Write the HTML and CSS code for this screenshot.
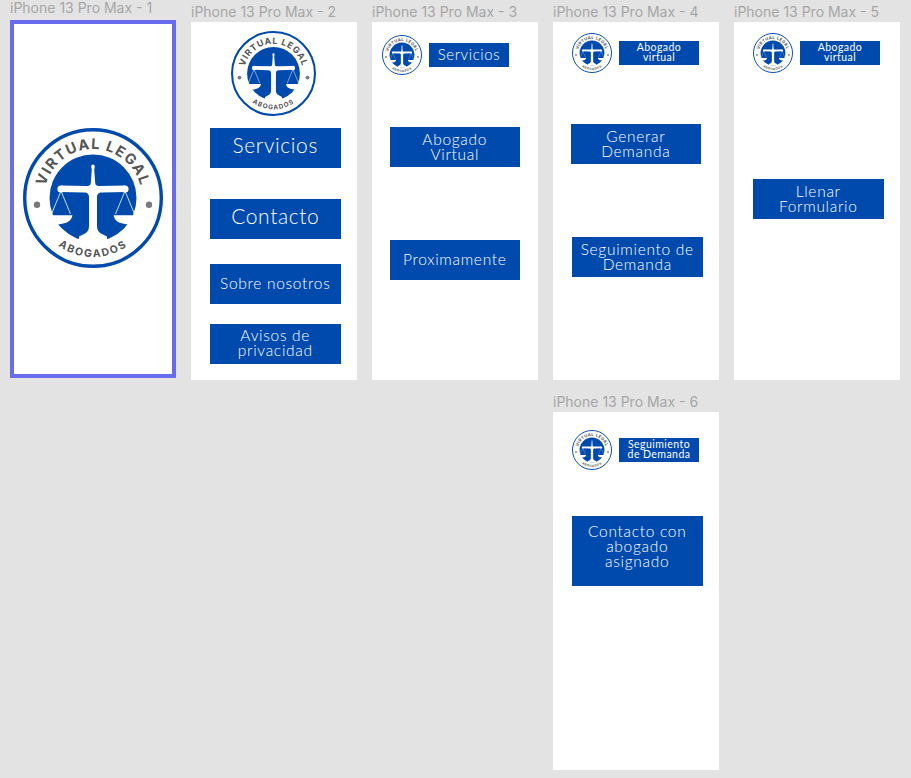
FILE: index.html
```html
<!DOCTYPE html>
<html lang="es">
<head>
<meta charset="utf-8">
<title>Virtual Legal</title>
<link rel="stylesheet" href="styles.css">
</head>
<body>
<svg class="defs" width="0" height="0" aria-hidden="true">
  <symbol id="logo" viewBox="-70 -70 140 140">
    <defs>
      <path id="arcTop" d="M-49 0A49 49 0 0 1 49 0"/>
      <path id="arcBot" d="M-59 0A59 59 0 0 0 59 0"/>
    </defs>
    <circle r="70" fill="#fff"/>
    <circle r="68.300" fill="none" stroke="#004aad" stroke-width="3.400"/>
    <circle r="43.500" fill="#004aad"/>
    <circle cx="-56" cy="6.700" r="3.200" fill="#7a7a7a"/>
    <circle cx="56" cy="6.700" r="3.200" fill="#7a7a7a"/>
    <path fill="#fff" d="M0 -33.500C1.300 -33.500 1.800 -32.500 1.800 -31L1.200 -28.500 2.200 -15C2.500 -12.500 4 -12 7 -12L32 -12.500V-6L9 -5.500C5.500 -5.500 4 -3.500 4 -1V28C4 32 5.500 34 8 35.500L14 38.500V44H-14V38.500L-8 35.500C-5.500 34 -4 32 -4 28V-1C-4 -3.500 -5.500 -5.500 -9 -5.500L-32 -6V-12.500L-7 -12C-4 -12 -2.500 -12.500 -2.200 -15L-1.200 -28.500-1.800 -31C-1.800 -32.500 -1.300 -33.500 0 -33.500Z"/>
    <circle cx="-32" cy="-9" r="3.600" fill="#fff"/>
    <circle cx="32" cy="-9" r="3.600" fill="#fff"/>
    <path fill="none" stroke="#fff" stroke-width=".8" d="M-32 -7-41.500 16M-32 -7-22.500 16M32 -7 41.500 16M32 -7 22.500 16"/>
    <path fill="#fff" d="M-46 17.200H-20.600C-21.500 22-24 25.500-36 26.500L-46 26.500ZM46 17.200H20.600C21.500 22 24 25.500 36 26.500L46 26.500Z"/>
    <text class="logo-top"><textPath href="#arcTop" startOffset="50%" text-anchor="middle">VIRTUAL LEGAL</textPath></text>
    <text class="logo-bot"><textPath href="#arcBot" startOffset="50%" text-anchor="middle">ABOGADOS</textPath></text>
  </symbol>
</svg>

<main class="canvas">
  <section class="col">
    <h2 class="label label-first">iPhone 13 Pro Max - 1</h2>
    <div class="frame frame-selected">
      <svg class="logo logo-xl"><use href="#logo"/></svg>
    </div>
  </section>

  <section class="col">
    <h2 class="label">iPhone 13 Pro Max - 2</h2>
    <div class="frame frame-home">
      <svg class="logo logo-lg"><use href="#logo"/></svg>
      <a class="btn btn-xl home-a">Servicios</a>
      <a class="btn btn-xl home-b">Contacto</a>
      <a class="btn btn-md home-c">Sobre nosotros</a>
      <a class="btn btn-md home-d">Avisos de<br>privacidad</a>
    </div>
  </section>

  <section class="col">
    <h2 class="label">iPhone 13 Pro Max - 3</h2>
    <div class="frame">
      <header class="head head-3">
        <svg class="logo logo-sm"><use href="#logo"/></svg>
        <span class="tag tag-lg">Servicios</span>
      </header>
      <a class="btn btn-md s3-a">Abogado<br>Virtual</a>
      <a class="btn btn-md s3-b">Proximamente</a>
    </div>
  </section>

  <section class="col">
    <h2 class="label">iPhone 13 Pro Max - 4</h2>
    <div class="frame">
      <header class="head head-4">
        <svg class="logo logo-sm"><use href="#logo"/></svg>
        <span class="tag">Abogado<br>virtual</span>
      </header>
      <a class="btn btn-md s4-a">Generar<br>Demanda</a>
      <a class="btn btn-md s4-b">Seguimiento de<br>Demanda</a>
    </div>
    <h2 class="label label-lower">iPhone 13 Pro Max - 6</h2>
    <div class="frame">
      <header class="head head-6">
        <svg class="logo logo-sm"><use href="#logo"/></svg>
        <span class="tag">Seguimiento<br>de Demanda</span>
      </header>
      <a class="btn btn-md btn-tall s6-a">Contacto con<br>abogado<br>asignado</a>
    </div>
  </section>

  <section class="col">
    <h2 class="label">iPhone 13 Pro Max - 5</h2>
    <div class="frame">
      <header class="head head-4">
        <svg class="logo logo-sm"><use href="#logo"/></svg>
        <span class="tag">Abogado<br>virtual</span>
      </header>
      <a class="btn btn-md s5-a">Llenar<br>Formulario</a>
    </div>
  </section>
</main>
</body>
</html>
```

FILE: styles.css
```css
* { box-sizing: border-box; }

html, body {
  margin: 0;
  height: 778px;
  overflow: hidden;
  background: #e3e3e3;
}

.defs { position: absolute; }

.canvas {
  display: flex;
  gap: 15.500px;
  padding-left: 10px;
  height: 778px;
}

.col {
  width: 165.500px;
  flex: none;
}

.label {
  margin: 0;
  height: 22px;
  padding-top: 3px;
  font: 400 14px/18px "Inter", sans-serif;
  color: #a6a6a6;
  white-space: nowrap;
}

.label-first { height: 20px; padding-top: 0; line-height: 16px; }
.label-lower { margin-top: 10px; height: 22px; padding-top: 3px; }

.frame {
  display: flex;
  flex-direction: column;
  height: 358px;
  background: #fff;
}

.frame-selected {
  height: 357.500px;
  border: 4px solid #6a6aee;
  padding: 104px 0 0 8.500px;
}

.frame-home { padding-top: 9px; }

.logo { display: block; flex: none; }
.logo-xl { width: 140px; height: 140px; }
.logo-lg { width: 85px; height: 85px; margin-left: 40px; }
.logo-sm { width: 40px; height: 40px; }

.logo-top {
  font: 700 14.500px "Inter", sans-serif;
  letter-spacing: 1.300px;
  fill: #555;
}

.logo-bot {
  font: 700 10.500px "Inter", sans-serif;
  letter-spacing: 1.700px;
  fill: #555;
}

.btn {
  display: flex;
  align-items: center;
  justify-content: center;
  width: 130.500px;
  height: 40px;
  flex: none;
  background: #004aad;
  color: #fff;
  font-family: "Lato", sans-serif;
  font-weight: 300;
  text-align: center;
}

.btn-xl { font-size: 21px; letter-spacing: .6px; padding-bottom: 7px; }
.btn-md { font-size: 15.500px; line-height: 15px; letter-spacing: .7px; padding-bottom: 1px; }
.btn-tall { height: 70px; padding-bottom: 9px; }

.home-a { margin: 12px 0 0 19px; }
.home-b { margin: 31px 0 0 19px; }
.home-c { margin: 25px 0 0 19px; }
.home-d { margin: 19.500px 0 0 19px; }

.head { display: flex; align-items: center; }
.head-3 { padding: 13px 0 0 9.500px; gap: 7.500px; }
.head-4 { padding: 11px 0 0 19px; gap: 7px; }
.head-6 { padding: 18px 0 0 19px; gap: 7px; }

.tag {
  display: flex;
  align-items: center;
  justify-content: center;
  width: 80px;
  height: 24.500px;
  background: #004aad;
  color: #fff;
  font: 400 10.500px/10px "Lato", sans-serif;
  letter-spacing: .45px;
  text-align: center;
  padding-bottom: 3px;
}

.tag-lg { font-size: 15px; font-weight: 300; letter-spacing: .6px; padding-bottom: 3px; }

.s3-a { margin: 52px 0 0 17.500px; }
.s3-b { margin: 73px 0 0 17.500px; }
.s4-a { margin: 51px 0 0 17.500px; }
.s4-b { margin: 73px 0 0 19px; }
.s5-a { margin: 106px 0 0 19px; }
.s6-a { margin: 46px 0 0 19px; }
```
